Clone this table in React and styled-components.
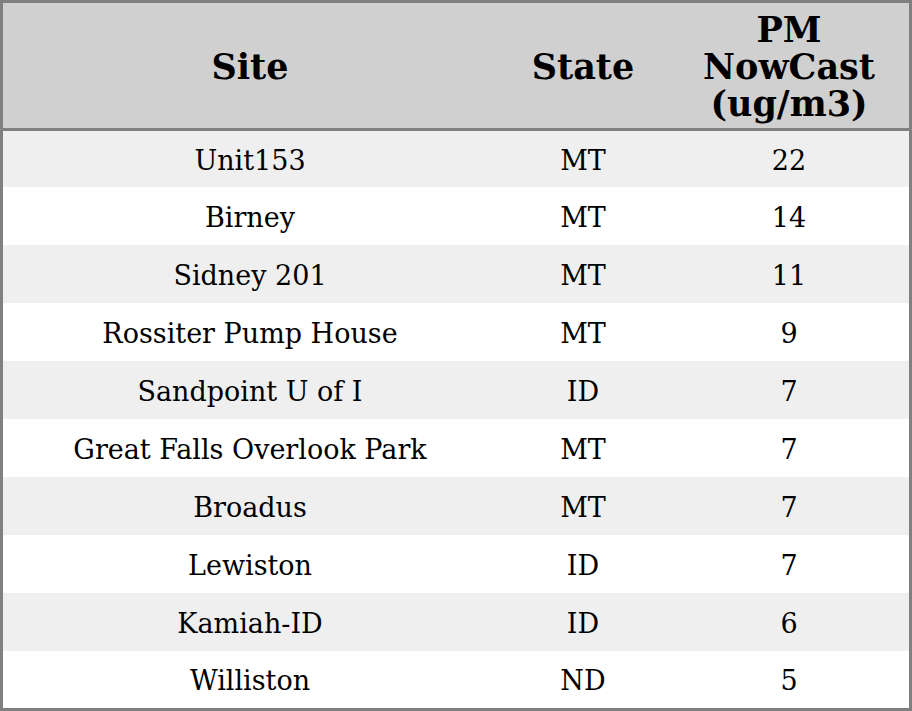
import React from "react";
import styled, { createGlobalStyle } from "styled-components";

const Global = createGlobalStyle`
  html, body { margin: 0; padding: 0; background: #fff; }
  body { font-family: "DejaVu Serif", serif; }
`;

const Table = styled.table`
  box-sizing: border-box;
  width: 912px;
  height: 711px;
  border: 3px solid #808080;
  border-collapse: separate;
  border-spacing: 0;
  table-layout: fixed;
  font-family: "DejaVu Serif", serif;
  color: #000;
`;

const HeadCell = styled.th`
  background: #d0d0d0;
  border-bottom: 3px solid #808080;
  font-size: 35px;
  font-weight: bold;
  text-align: center;
  vertical-align: middle;
  padding: 2px 4px 0;
  height: 128px;
  line-height: 37px;
  box-sizing: border-box;
`;

const Row = styled.tr`
  background: ${(p) => (p.$odd ? "#efefef" : "#ffffff")};
  height: ${(p) => p.$h}px;
`;

const Cell = styled.td`
  font-size: 27px;
  text-align: center;
  vertical-align: middle;
  padding: 2px 0 0;
  white-space: nowrap;
`;

const data = [
  ["Unit153", "MT", "22"],
  ["Birney", "MT", "14"],
  ["Sidney 201", "MT", "11"],
  ["Rossiter Pump House", "MT", "9"],
  ["Sandpoint U of I", "ID", "7"],
  ["Great Falls Overlook Park", "MT", "7"],
  ["Broadus", "MT", "7"],
  ["Lewiston", "ID", "7"],
  ["Kamiah-ID", "ID", "6"],
  ["Williston", "ND", "5"],
];

export default function App() {
  return (
    <>
      <Global />
      <Table>
        <colgroup>
          <col style={{ width: 494 }} />
          <col style={{ width: 172 }} />
          <col style={{ width: 240 }} />
        </colgroup>
        <thead>
          <tr>
            <HeadCell>Site</HeadCell>
            <HeadCell>State</HeadCell>
            <HeadCell>PM NowCast (ug/m3)</HeadCell>
          </tr>
        </thead>
        <tbody>
          {data.map((r, i) => (
            <Row key={i} $odd={i % 2 === 0} $h={i === 0 ? 56 : i === 9 ? 57 : 58}>
              <Cell>{r[0]}</Cell>
              <Cell>{r[1]}</Cell>
              <Cell>{r[2]}</Cell>
            </Row>
          ))}
        </tbody>
      </Table>
    </>
  );
}
